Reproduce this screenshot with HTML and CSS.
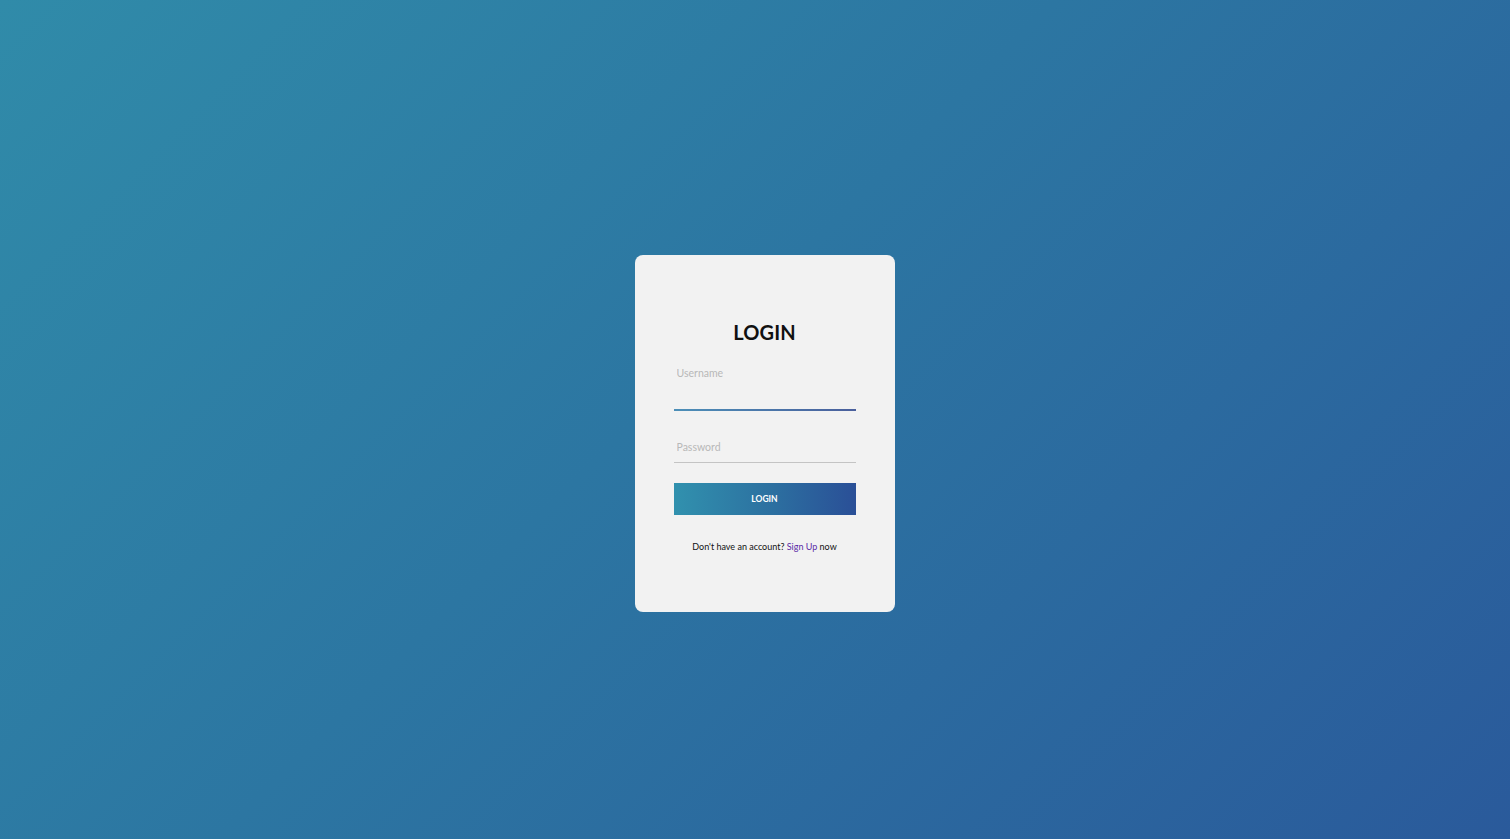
FILE: index.html
```html
<!DOCTYPE html>
<html>
<head>
<meta charset="utf-8">
<link rel="stylesheet" href="styles.css">
</head>
<body>
<div class="page">
  <div class="card">
    <h1 class="title">LOGIN</h1>
    <div class="field field-active">
      <input class="input" type="text" placeholder="Username">
    </div>
    <div class="field field-plain">
      <input class="input" type="password" placeholder="Password">
    </div>
    <button class="btn">LOGIN</button>
    <p class="footer">Don't have an account? <a class="link" href="#">Sign Up</a> now</p>
  </div>
</div>
</body>
</html>
```
FILE: styles.css
```css
html, body {
  margin: 0;
  padding: 0;
}
body {
  font-family: Lato, "Liberation Sans", sans-serif;
}
.page {
  width: 1510px;
  height: 839px;
  display: flex;
  align-items: center;
  justify-content: center;
  background: linear-gradient(135deg, #308ba9 0%, #2c76a2 45%, #2a5a9b 100%);
}
.card {
  width: 182px;
  height: 357px;
  margin: 28px 0 0 19px;
  padding: 0 39px;
  background: #f2f2f2;
  border-radius: 8px;
  display: flex;
  flex-direction: column;
  box-sizing: content-box;
}
.title {
  margin: 64px 0 0;
  font-size: 20px;
  font-weight: 700;
  text-align: center;
  color: #111;
  line-height: 26px;
  letter-spacing: 0.1px;
}
.field {
  display: flex;
  flex-direction: column;
}
.field-active {
  margin-top: 16px;
  height: 48px;
  border-bottom: 2px solid #3a6ea8;
  border-image: linear-gradient(90deg, #4c8fb8, #4a5f9c) 1;
}
.field-active .input {
  height: 24px;
}
.field-plain {
  margin-top: 26px;
  height: 25px;
  border-bottom: 1px solid #c4c4c4;
  justify-content: flex-start;
}
.input {
  border: none;
  outline: none;
  background: transparent;
  font-family: Lato, "Liberation Sans", sans-serif;
  font-size: 10.5px;
  padding: 0 0 0 3px;
  height: 20px;
  color: #333;
}
.input::placeholder {
  color: #b8b8b8;
}
.btn {
  margin-top: 20px;
  height: 32px;
  border: none;
  background: linear-gradient(90deg, #3191ae 0%, #2c6fa0 55%, #2a4f97 100%);
  color: #fff;
  font-family: Lato, "Liberation Sans", sans-serif;
  font-size: 8.5px;
  font-weight: 700;
  padding: 0;
}
.footer {
  margin: 26px 0 0;
  text-align: center;
  font-size: 9px;
  color: #111;
}
.link {
  color: #5b2aa6;
  text-decoration: none;
}
```
